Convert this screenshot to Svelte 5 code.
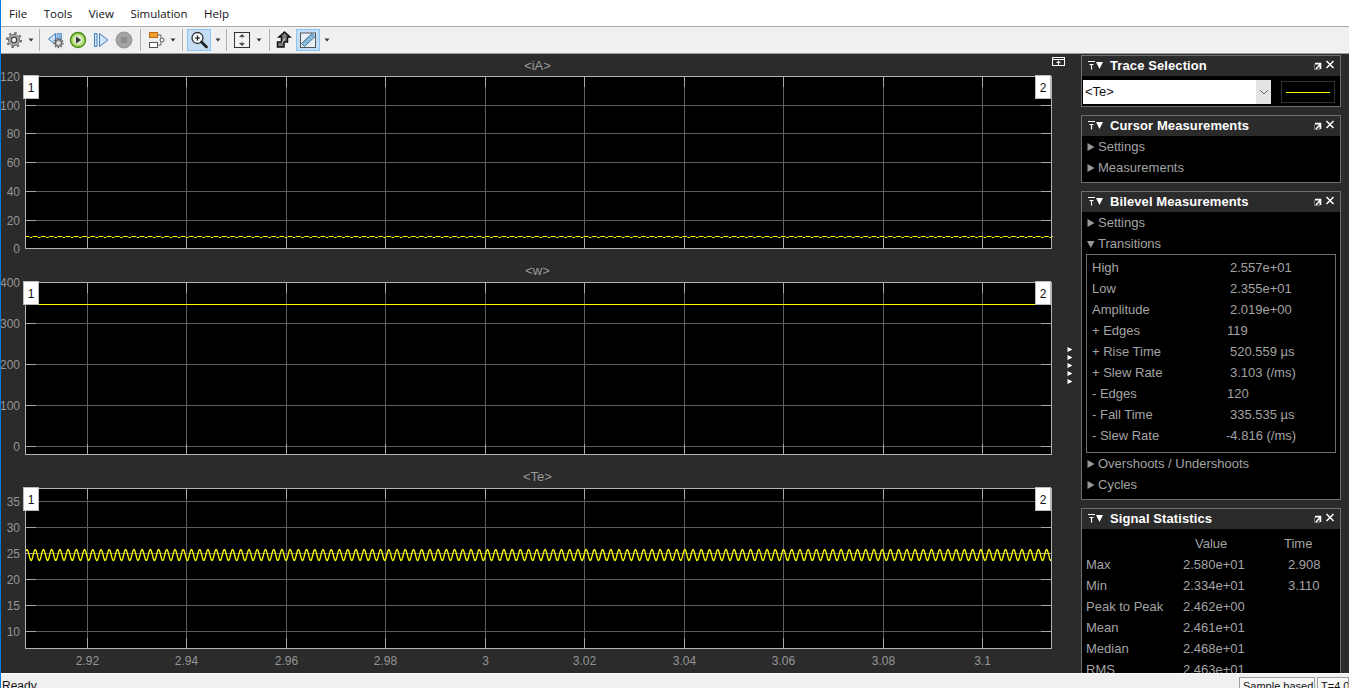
<script>
  const menus = ['File', 'Tools', 'View', 'Simulation', 'Help'];

  const gridX = [87, 186, 286, 385, 485, 584, 684, 783, 883, 982];
  const xLabels = ['2.92', '2.94', '2.96', '2.98', '3', '3.02', '3.04', '3.06', '3.08', '3.1'];

  // small dips on the current trace
  function dipTrace(y) {
    let d = `M25.5 ${y}`;
    for (let x = 29; x < 1049; x += 8.223) {
      d += ` L${x.toFixed(1)} ${y} L${(x + 1).toFixed(1)} ${y + 1} L${(x + 3).toFixed(1)} ${y + 1} L${(x + 4).toFixed(1)} ${y}`;
    }
    return d + ` L1051 ${y}`;
  }

  // torque ripple
  function rippleTrace(mid, amp) {
    const pts = [];
    for (let x = 26; x <= 1051; x += 0.5) {
      pts.push(`${x} ${(mid - amp * Math.cos((2 * Math.PI * (x - 27)) / 8.223)).toFixed(1)}`);
    }
    return 'M' + pts.join(' L');
  }

  const plots = [
    {
      title: '<iA>', height: 172, first: true,
      ticks: [[0, '120'], [29, '100'], [57, '80'], [86, '60'], [115, '40'], [144, '20'], [172, '0']],
      trace: dipTrace(160.5)
    },
    {
      title: '<w>', height: 172,
      ticks: [[0, '400'], [41, '300'], [82, '200'], [123, '100'], [164, '0']],
      trace: 'M25.5 22.5 L1051 22.5'
    },
    {
      title: '<Te>', height: 160, xAxis: true,
      ticks: [[13, '35'], [39, '30'], [65, '25'], [91, '20'], [117, '15'], [143, '10']],
      trace: rippleTrace(67, 5.5)
    }
  ];

  const transitions = [
    ['High', '2.557e+01', ''], ['Low', '2.355e+01', ''], ['Amplitude', '2.019e+00', ''],
    ['+ Edges', '119', 'near'], ['+ Rise Time', '520.559 µs', ''], ['+ Slew Rate', '3.103 (/ms)', ''],
    ['- Edges', '120', 'near'], ['- Fall Time', '335.535 µs', ''], ['- Slew Rate', '-4.816 (/ms)', 'flush']
  ];

  const stats = [
    ['Max', '2.580e+01', '2.908'], ['Min', '2.334e+01', '3.110'], ['Peak to Peak', '2.462e+00', ''],
    ['Mean', '2.461e+01', ''], ['Median', '2.468e+01', ''], ['RMS', '2.463e+01', '']
  ];
</script>

{#snippet drop()}
  <svg class="drop" viewBox="0 0 13 8" width="13" height="8"><path d="M4.5 2.5h5L7 5.5z" fill="#333" /></svg>
{/snippet}

{#snippet panelHead(title)}
  <div class="head">
    <svg class="pin" viewBox="0 0 17 12" width="17" height="12">
      <path d="M2 1.500h7M3.500 4.500h4M5.500 4.500v5" stroke="#fff" stroke-width="1.200" fill="none" />
      <path d="M11 2h7l-3.500 7z" fill="#fff" transform="translate(-1 0)" />
    </svg>
    <span class="head-title">{title}</span>
    <svg class="head-tools" viewBox="0 0 24 12" width="24" height="12">
      <path d="M1.500 4.500h5v5h-5z" fill="none" stroke="#777" />
      <path d="M2 3.500h5.500v5.500M3 9l4-4.500" fill="none" stroke="#fff" stroke-width="1.500" />
      <path d="M13.500 1l7 7M20.500 1l-7 7" stroke="#fff" stroke-width="1.500" />
    </svg>
  </div>
{/snippet}

{#snippet row(label, open)}
  <div class="row">
    {#if open}
      <svg class="tri" viewBox="0 0 8 8" width="8" height="8"><path d="M0 1h7.500L3.750 8z" fill="#999" /></svg>
    {:else}
      <svg class="tri" viewBox="0 0 8 8" width="8" height="8"><path d="M0.500 0L7.500 4 0.500 8z" fill="#999" /></svg>
    {/if}
    <span>{label}</span>
  </div>
{/snippet}

<div class="app">
  <nav class="menu">
    {#each menus as item}
      <span>{item}</span>
    {/each}
  </nav>

  <div class="toolbar">
    <div class="tool m3">
      <svg viewBox="0 0 20 20" width="20" height="20">
        <circle cx="10" cy="10" r="7" fill="none" stroke="#6f6f6f" stroke-width="2" stroke-dasharray="2.500 3" />
        <circle cx="10" cy="10" r="5.500" fill="#b9b9b9" stroke="#666" />
        <circle cx="10" cy="10" r="2.800" fill="#f2f2f2" stroke="#444" stroke-width="1.300" />
      </svg>
    </div>
    {@render drop()}
    <i class="sep m2"></i>

    <div class="tool m6">
      <svg viewBox="0 0 20 20" width="20" height="20">
        <path d="M9.500 3.500L2.500 9l7 5.500z" fill="#cfe3f7" stroke="#3f7fc0" />
        <path d="M11 3.500h2v6h-2zM14 3.500h1.500v6H14z" fill="#cfe3f7" stroke="#3f7fc0" stroke-width=".8" />
        <circle cx="12.500" cy="13" r="4.500" fill="none" stroke="#666" stroke-width="1.400" stroke-dasharray="1.600 1.500" />
        <circle cx="12.500" cy="13" r="3.400" fill="#aaa" stroke="#555" />
        <circle cx="12.500" cy="13" r="1.500" fill="#eee" />
      </svg>
    </div>
    <div class="tool m2">
      <svg viewBox="0 0 20 20" width="20" height="20">
        <circle cx="10" cy="10" r="7.500" fill="#a5d85c" stroke="#4f8a1f" stroke-width="1.400" />
        <circle cx="10" cy="10" r="5" fill="#d8e8c4" />
        <path d="M8 6.500l5 3.500-5 3.500z" fill="#333" />
      </svg>
    </div>
    <div class="tool m3">
      <svg viewBox="0 0 20 20" width="20" height="20">
        <path d="M3.500 3.500h2.500v13H3.500z" fill="#cfe3f7" stroke="#3f7fc0" />
        <path d="M8.500 3.500l8.500 6.500-8.500 6.500z" fill="#cfe3f7" stroke="#3f7fc0" />
      </svg>
    </div>
    <div class="tool m3">
      <svg viewBox="0 0 20 20" width="20" height="20">
        <circle cx="10" cy="10" r="8" fill="#a3a3a3" stroke="#969696" />
        <rect x="7" y="7" width="6" height="6" fill="#8c8c8c" />
      </svg>
    </div>
    <i class="sep m6"></i>

    <div class="tool m5">
      <svg viewBox="0 0 20 20" width="20" height="20">
        <rect x="3.500" y="2.500" width="8" height="5" fill="#f0a030" stroke="#c06a10" />
        <rect x="3.500" y="12.500" width="8" height="5" fill="#fff" stroke="#555" />
        <path d="M11.500 5h3.500v10h-3.500" fill="none" stroke="#666" />
        <circle cx="16" cy="10" r="2" fill="#fff" stroke="#555" />
      </svg>
    </div>
    {@render drop()}
    <i class="sep m3"></i>

    <div class="tool on m4">
      <svg viewBox="0 0 20 20" width="20" height="20">
        <circle cx="8.500" cy="8" r="5.500" fill="#f5fafd" stroke="#333" stroke-width="1.300" />
        <path d="M6 8h5M8.500 5.500v5" stroke="#111" stroke-width="1.200" />
        <path d="M12.500 12l5 5" stroke="#222" stroke-width="2.800" stroke-linecap="round" />
      </svg>
    </div>
    {@render drop()}
    <i class="sep m2"></i>

    <div class="tool m5">
      <svg viewBox="0 0 20 20" width="20" height="20">
        <rect x="2.500" y="2.500" width="15" height="15" fill="#f4f4f4" stroke="#333" />
        <path d="M10 4l3 3H7zM10 16l3-3H7z" fill="#444" />
        <path d="M10 6.500v2M10 11.500v2" stroke="#888" />
      </svg>
    </div>
    {@render drop()}
    <i class="sep m4"></i>

    <div class="tool m4">
      <svg viewBox="0 0 20 20" width="20" height="20">
        <path d="M3.500 17v-5h4V7H5l5.500-5L16 7h-2.500v5H10v5z" fill="#777" stroke="#111" stroke-width="1.500" stroke-linejoin="miter" />
        <path d="M8 13l3-5" stroke="#ddd" />
      </svg>
    </div>
    <div class="tool on m2">
      <svg viewBox="0 0 20 20" width="20" height="20">
        <rect x="2.500" y="3" width="15" height="14.500" fill="#e8f0f6" stroke="#555" />
        <path d="M3.500 13.500L14 3.500l3 3L6.500 16.500z" fill="#8fc3e3" stroke="#3a6f96" />
        <path d="M7 11.500l1 1M9 9.500l1 1M11 7.500l1 1M13 5.500l1 1" stroke="#2f5f84" />
      </svg>
    </div>
    {@render drop()}
  </div>

  <main class="main">
    <section class="scopes">
      {#each plots as plot}
        <div class="plot-title" class:first={plot.first}>{plot.title}</div>
        <svg class="axes" class:with-x={plot.xAxis} viewBox="1 0 1051 {plot.height + (plot.xAxis ? 25 : 1)}">
          <rect x="25.500" y="0.500" width="1026" height={plot.height} fill="#000" />
          {#each plot.ticks as [y, label]}
            {#if y > 0 && y < plot.height}
              <path class="grid" d="M26 {y + 0.5}H1051" />
              <path class="tick" d="M26 {y + 0.5}H36M1041 {y + 0.5}H1051" />
            {/if}
            <text class="ylab" x="20" y={y + 4.500}>{label}</text>
          {/each}
          {#each gridX as x}
            <path class="grid" d="M{x + 0.5} 1V{plot.height}" />
            <path class="tick" d="M{x + 0.5} 1V11M{x + 0.5} {plot.height - 10}V{plot.height}" />
          {/each}
          <path class="trace" class:thick={plot.xAxis} d={plot.trace} />
          <rect class="frame" x="25.500" y="0.500" width="1026" height={plot.height} />
          <rect class="badge" x="23.500" y="-0.500" width="15" height="23" />
          <text class="badge-no" x="31" y="15.500">1</text>
          <rect class="badge" x="1035.500" y="-0.500" width="15" height="23" />
          <text class="badge-no" x="1043" y="15.500">2</text>
          {#if plot.xAxis}
            {#each gridX as x, i}
              <text class="xlab" x={x + 0.500} y={plot.height + 17}>{xLabels[i]}</text>
            {/each}
          {/if}
        </svg>
      {/each}
    </section>

    <div class="gutter">
      <svg class="undock" viewBox="0 0 13 9" width="13" height="9">
        <rect x="0.500" y="0.500" width="12" height="8" fill="none" stroke="#fff" />
        <path d="M1 2.500h11" stroke="#fff" />
        <path d="M6.500 3.500l-2.500 2.500h2v2.500h1V6h2z" fill="#fff" />
      </svg>
      <svg class="collapse" viewBox="0 0 6 37" width="6" height="37">
        {#each [0, 8, 16, 24, 32] as y}
          <path d="M0.500 {y}l5 2.500-5 2.500z" fill="#fff" />
        {/each}
      </svg>
    </div>

    <aside class="panels">
      <div class="panel trace-sel">
        {@render panelHead('Trace Selection')}
        <div class="trace-body">
          <div class="combo">
            <span class="combo-value">&lt;Te&gt;</span>
            <span class="combo-btn">
              <svg viewBox="0 0 10 6" width="10" height="6"><path d="M1 1l4 4 4-4" fill="none" stroke="#666" /></svg>
            </span>
          </div>
          <div class="swatch"><i></i></div>
        </div>
      </div>

      <div class="panel">
        {@render panelHead('Cursor Measurements')}
        {@render row('Settings')}
        {@render row('Measurements')}
      </div>

      <div class="panel">
        {@render panelHead('Bilevel Measurements')}
        {@render row('Settings')}
        {@render row('Transitions', true)}
        <div class="measure-box">
          {#each transitions as [label, value, kind]}
            <div class="measure">
              <span>{label}</span>
              <span class="val {kind}">{value}</span>
            </div>
          {/each}
        </div>
        {@render row('Overshoots / Undershoots')}
        {@render row('Cycles')}
      </div>

      <div class="panel last">
        {@render panelHead('Signal Statistics')}
        <div class="stat stat-head">
          <span></span><span class="col-value">Value</span><span>Time</span>
        </div>
        {#each stats as [label, value, time]}
          <div class="stat">
            <span>{label}</span><span>{value}</span><span class="time">{time}</span>
          </div>
        {/each}
      </div>
    </aside>
  </main>

  <footer class="status">
    <span class="ready">Ready</span>
    <span class="cell sample">Sample based</span>
    <span class="cell offset">T=4.000</span>
  </footer>
</div>

<style>
  :global(body) { margin: 0; background: #2b2b2b; }
  .app { width: 1349px; height: 688px; box-sizing: border-box; border-left: 1px solid #0078d7; overflow: hidden; display: flex; flex-direction: column; font-family: "Liberation Sans", Arial, sans-serif; }

  .menu { height: 27px; flex: none; background: #fff; display: flex; align-items: center; padding: 0 0 0 8px; box-sizing: border-box; gap: 16.5px; font: 11.5px "Open Sans", "Noto Sans", sans-serif; color: #111; border-bottom: 1px solid #a9a9a9; }

  .toolbar { height: 27px; flex: none; box-sizing: border-box; background: #f0f0f0; display: flex; align-items: center; border-bottom: 1px solid #9c9c9c; }
  .tool { width: 20px; height: 20px; flex: none; }
  .tool svg { display: block; }
  .tool.on { width: 24px; height: 22px; box-sizing: border-box; background: #c4dff5; border: 1px solid #8cc4f0; padding: 0 1px; }
  .drop { flex: none; }
  .sep { width: 1px; height: 22px; flex: none; background: #b0b0b0; }
  .m2 { margin-left: 2px; }
  .m3 { margin-left: 3px; }
  .m4 { margin-left: 4px; }
  .m5 { margin-left: 5px; }
  .m6 { margin-left: 6px; }

  .main { flex: 1; min-height: 0; display: flex; background: #2b2b2b; }
  .scopes { width: 1051px; flex: none; display: flex; flex-direction: column; }
  .plot-title { height: 33px; flex: none; box-sizing: border-box; padding-bottom: 4px; display: flex; align-items: flex-end; justify-content: center; padding-left: 22px; font-size: 13px; color: #9a9a9a; }
  .plot-title.first { height: 22px; padding-bottom: 3px; }
  .axes { display: block; width: 1051px; flex: none; overflow: visible; height: 173px; }
  .axes.with-x { height: 185px; }
  .grid { stroke: #5e5e5e; stroke-width: 1; fill: none; }
  .tick { stroke: #a8a8a8; stroke-width: 1; fill: none; }
  .frame { fill: none; stroke: #b4b4b4; }
  .trace { stroke: #ffff00; stroke-width: 1; fill: none; stroke-linejoin: round; }
  .trace.thick { stroke-width: 1.300; }
  .badge { fill: #fff; stroke: #bbb; }
  .badge-no { font-size: 12px; fill: #111; text-anchor: middle; }
  .ylab { font-size: 12px; fill: #959595; text-anchor: end; }
  .xlab { font-size: 12px; fill: #959595; text-anchor: middle; }

  .gutter { width: 29px; flex: none; display: flex; flex-direction: column; align-items: flex-start; }
  .undock { margin-top: 3px; flex: none; }
  .collapse { margin: 281px 0 0 15px; flex: none; }

  .panels { width: 260px; flex: none; padding-top: 1px; display: flex; flex-direction: column; gap: 8px; color: #a3a3a3; font-size: 13px; }
  .panel { background: #000; border: 1px solid #6e6e6e; padding-bottom: 4px; flex: none; }
  .head { height: 20px; background: #2b2b2b; display: flex; align-items: center; }
  .pin { margin-left: 4px; flex: none; }
  .head-title { margin-left: 7px; flex: 1; color: #fff; font-weight: 700; font-size: 13px; letter-spacing: .1px; line-height: 20px; white-space: nowrap; }
  .head-tools { margin-right: 3px; flex: none; }
  .row { height: 21px; display: flex; align-items: center; padding-left: 5px; gap: 3px; }
  .tri { flex: none; }

  .trace-body { display: flex; padding: 4px 0 0 1px; }
  .combo { width: 188px; height: 24px; background: #fff; display: flex; color: #111; }
  .combo-value { flex: 1; line-height: 24px; padding-left: 2px; }
  .combo-btn { width: 15px; background: #e4e4e4; display: flex; align-items: center; justify-content: center; }
  .swatch { width: 52px; height: 20px; margin: 1px 0 0 10px; border: 1px solid #333; display: flex; align-items: center; justify-content: center; }
  .swatch i { width: 44px; height: 1px; background: #ffff00; }
  .trace-sel { padding-bottom: 2px; }

  .measure-box { margin: 0 4px 0 4px; border: 1px solid #6e6e6e; padding: 2px 0 6px; }
  .measure { height: 21px; display: grid; grid-template-columns: 134px 1fr; padding-left: 5px; line-height: 21px; }
  .val { padding-left: 4px; }
  .val.near { padding-left: 1px; }
  .val.flush { padding-left: 0; }

  .stat { height: 21px; display: grid; grid-template-columns: 97px 101px 1fr; padding-left: 4px; line-height: 21px; }
  .stat-head { margin-top: 4px; }
  .col-value { padding-left: 12px; }
  .time { padding-left: 4px; }

  .status { height: 14px; flex: none; background: #f0f0f0; border-top: 1px solid #fff; display: flex; font-size: 11px; color: #111; }
  .ready { padding: 5px 0 0 1px; flex: 1; line-height: 14px; font-size: 12px; }
  .cell { box-sizing: border-box; margin-top: 3px; height: 20px; border: 1px solid #a0a0a0; background: #f7f7f7; padding: 1px 3px; line-height: 14px; white-space: nowrap; }
  .sample { width: 76px; margin-right: 2px; }
  .offset { width: 32px; overflow: hidden; }
</style>
